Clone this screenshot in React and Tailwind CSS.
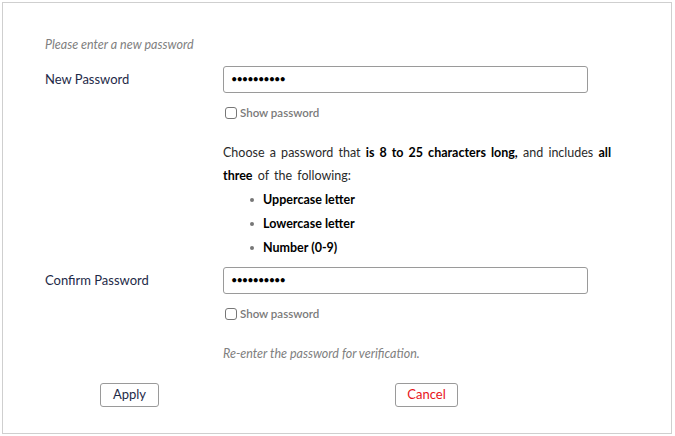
import React from 'react';

function ShowPassword() {
  return (
    <label className="flex items-center gap-[3px] text-[11.5px] font-semibold text-[#7a7a7a] h-[14px]">
      <span className="w-[12px] h-[12px] border border-[#777] rounded-[3px] bg-white ml-[2px]" />
      Show password
    </label>
  );
}

function PasswordInput() {
  return (
    <div className="w-[365px] h-[27px] border border-[#9a9a9a] rounded-[3px] flex items-center px-[7px] text-[11px] tracking-[-1px] text-black">
      ••••••••••
    </div>
  );
}

export default function App() {
  return (
    <div className="w-[675px] h-[436px] bg-white p-[2px] font-['Lato',sans-serif]">
      <div className="w-[670px] h-[432px] border border-[#cfcfcf] pt-[33px] pl-[42px]">
        <p className="italic text-[12.5px] text-[#808080] h-[18px] leading-[18px]">Please enter a new password</p>

        <div className="flex mt-[12px]">
          <div className="w-[178px] h-[27px] flex items-center text-[13px] text-[#1e2a48]">New Password</div>
          <div className="flex flex-col">
            <PasswordInput />
            <div className="mt-[13px]">
              <ShowPassword />
            </div>
            <div className="mt-[21px] text-[12.5px] text-[#2a2a2a] leading-[23px] w-[392px] [word-spacing:2px]">
              Choose a password that <b className="font-bold text-black">is 8 to 25 characters long,</b> and includes <b className="font-bold text-black">all three</b> of the following:
            </div>
            <ul className="mt-[1px] pl-[27px] text-[12.5px] font-bold text-black leading-[24px]">
              {['Uppercase letter', 'Lowercase letter', 'Number (0-9)'].map((t) => (
                <li key={t} className="flex items-center gap-[9px]">
                  <span className="w-[4px] h-[4px] rounded-full bg-[#777]" />
                  {t}
                </li>
              ))}
            </ul>
          </div>
        </div>

        <div className="flex mt-[7px]">
          <div className="w-[178px] h-[27px] flex items-center text-[13px] text-[#1e2a48]">Confirm Password</div>
          <div className="flex flex-col">
            <PasswordInput />
            <div className="mt-[13px]">
              <ShowPassword />
            </div>
            <p className="mt-[24px] italic text-[12.5px] text-[#808080] h-[18px] leading-[18px]">Re-enter the password for verification.</p>
          </div>
        </div>

        <div className="flex mt-[20px]">
          <button className="ml-[55px] w-[59px] h-[24px] border border-[#9a9a9a] rounded-[3px] text-[13px] text-[#1e2a48] bg-white">Apply</button>
          <button className="ml-[236px] w-[63px] h-[24px] border border-[#9a9a9a] rounded-[3px] text-[13px] text-[#e8141b] bg-white">Cancel</button>
        </div>
      </div>
    </div>
  );
}
